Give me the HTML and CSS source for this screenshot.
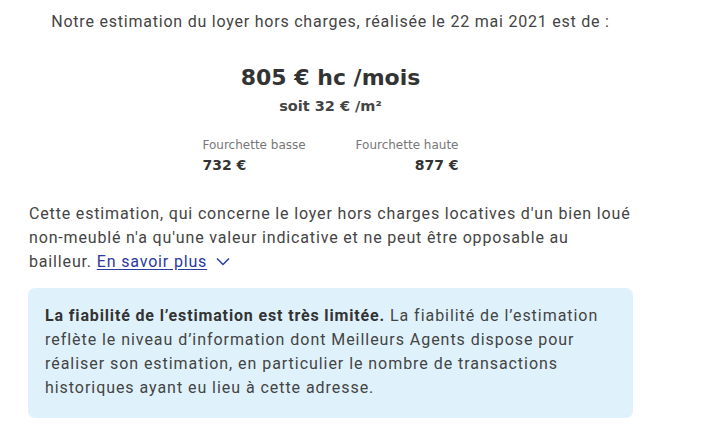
FILE: index.html
```html
<!DOCTYPE html>
<html lang="fr">
<head>
<meta charset="utf-8">
<link rel="stylesheet" href="styles.css">
</head>
<body>
<main class="card">
  <p class="intro">Notre estimation du loyer hors charges, réalisée le 22 mai 2021 est de :</p>
  <div class="price">805 € hc /mois</div>
  <div class="per-m2">soit 32 € /m²</div>
  <div class="range">
    <div class="range-col">
      <div class="range-label">Fourchette basse</div>
      <div class="range-value">732 €</div>
    </div>
    <div class="range-col right">
      <div class="range-label">Fourchette haute</div>
      <div class="range-value">877 €</div>
    </div>
  </div>
  <p class="note">Cette estimation, qui concerne le loyer hors charges locatives d'un bien loué non-meublé n'a qu'une valeur indicative et ne peut être opposable au bailleur. <a class="more" href="#">En savoir plus</a><svg class="chev" width="14" height="9" viewBox="0 0 14 9"><path d="M1 1.5 L7 7.5 L13 1.5" fill="none" stroke="#2a3fa0" stroke-width="1.5"/></svg></p>
  <div class="alert"><strong>La fiabilité de l’estimation est très limitée.</strong> La fiabilité de l’estimation reflète le niveau d’information dont Meilleurs Agents dispose pour réaliser son estimation, en particulier le nombre de transactions historiques ayant eu lieu à cette adresse.</div>
</main>
</body>
</html>
```
FILE: styles.css
```css
html, body { margin: 0; padding: 0; background: #fff; }
body { font-family: Roboto, "Liberation Sans", sans-serif; color: #3a3a3a; }
.card { width: 605px; margin-left: 28px; padding-top: 11px; }
.intro { margin: 0; text-align: center; font-size: 16px; letter-spacing: 0.78px; line-height: 22px; color: #444; }
.price { margin-top: 32px; text-align: center; font-family: "DejaVu Sans", sans-serif; font-weight: bold; font-size: 22px; line-height: 26px; color: #333; }
.per-m2 { margin-top: 5px; text-align: center; font-family: "DejaVu Sans", sans-serif; font-weight: bold; font-size: 14.5px; line-height: 20px; color: #444; }
.range { width: 256px; margin: 21px auto 0; display: flex; justify-content: space-between; font-family: "DejaVu Sans", sans-serif; }
.range-col.right { text-align: right; }
.range-label { font-size: 12px; line-height: 16px; color: #777; }
.range-value { margin-top: 3px; font-size: 14px; font-weight: bold; line-height: 18px; color: #333; }
.note { margin: 28px 0 0 1px; font-size: 16px; letter-spacing: 0.84px; line-height: 24px; color: #444; }
.more { color: #2a3aa0; text-decoration: underline; text-underline-offset: 2px; }
.chev { margin-left: 9px; vertical-align: 1px; }
.alert { margin-top: 14px; background: #dff2fc; border-radius: 7px; padding: 16px 16px 18px 17px; font-size: 16px; letter-spacing: 0.95px; line-height: 24px; color: #444; }
.alert strong { color: #333; letter-spacing: 0.85px; }
```
